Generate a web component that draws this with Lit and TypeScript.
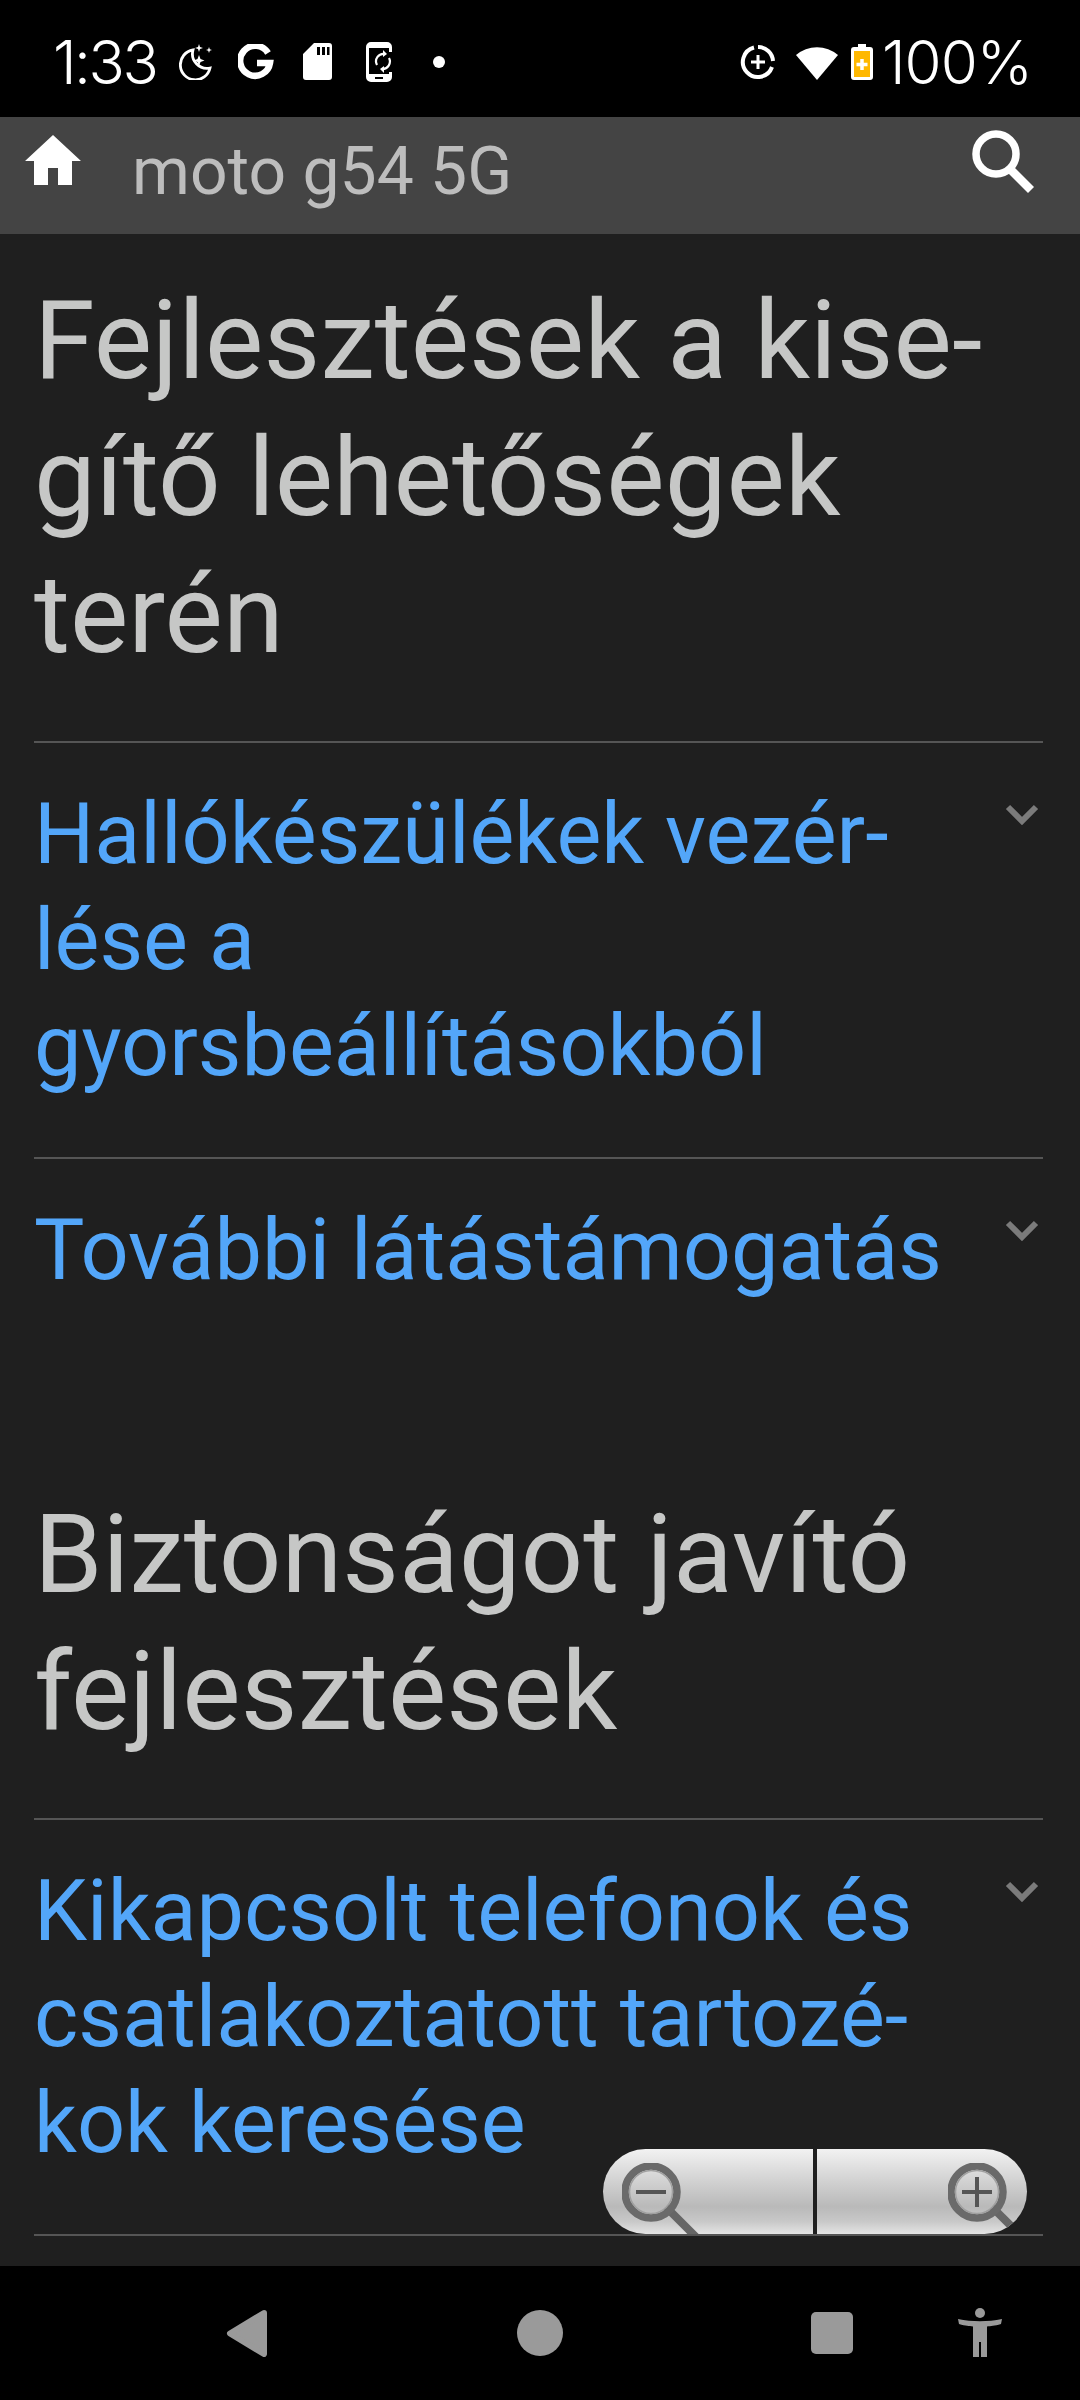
import { LitElement, html, css, svg } from "lit";
import { customElement } from "lit/decorators.js";

const SHY = "\u00AD";

const chevron = html`<svg class="chev" viewBox="0 0 34 22" width="34" height="22"><path d="M3 4 L17 18 L31 4" fill="none" stroke="#7b7b7b" stroke-width="6"/></svg>`;

const glass = (plus: boolean) => html`<svg class="glass" viewBox="0 0 80 80" width="80" height="80">
  <path d="M44 44 L74 74" stroke="#666" stroke-width="8" fill="none"/>
  <circle cx="29" cy="29" r="26" fill="none" stroke="#6a6a6a" stroke-width="7.5"/>
  <circle cx="29" cy="29" r="21.5" fill="none" stroke="#a0a0a0" stroke-width="1.5"/>
  <path d="M14 29 H44" stroke="#555" stroke-width="4"/>
  ${plus ? svg`<path d="M29 14 V44" stroke="#555" stroke-width="4"/>` : ""}
</svg>`;

@customElement("app-root")
export class AppRoot extends LitElement {
  static styles = css`
    :host { display: block; width: 1080px; height: 2400px; font-family: Roboto, "Liberation Sans", sans-serif; background: #1f1f1f; overflow: hidden; }
    .page { position: relative; display: flex; flex-direction: column; height: 2400px; }
    .status { height: 117px; flex: none; background: #000; display: flex; align-items: center; padding: 6px 54px 0 53px; box-sizing: border-box; color: #fff; font-family: Inter, sans-serif; font-weight: 300; font-size: 60px; }
    .status svg { display: block; flex: none; }
    .status .time { width: 126px; line-height: 1; letter-spacing: -2.5px; white-space: nowrap; }
    .s-g { margin-left: 25px; } .s-sd { margin-left: 29px; } .s-ph { margin-left: 34px; } .s-dot { margin-left: 41px; }
    .spacer { flex: 1; }
    .s-wifi { margin-left: 20px; } .s-bat { margin-left: 13px; }
    .pct { margin-left: 9px; line-height: 1; letter-spacing: -1px; width: 144px; white-space: nowrap; }
    .bar { height: 117px; flex: none; background: #444; display: flex; align-items: flex-start; padding: 0 46px 0 25px; box-sizing: border-box; }
    .bar .home { margin-top: 18px; }
    .bar .title { margin-left: 51px; margin-top: 17px; font-size: 66px; line-height: 76px; color: #bdbdbd; }
    .bar .spacer { flex: 1; }
    .bar .search { margin-top: 13px; }
    .content { flex: 1; min-height: 0; padding: 0 37px 0 34px; overflow: hidden; }
    h2 { margin: 0; font-weight: 400; font-size: 110px; line-height: 137px; color: #c6c7c6; }
    h2.first { margin-top: 38px; padding-bottom: 58px; }
    h2.second { margin-top: 125px; padding-bottom: 58px; }
    .item { border-top: 2px solid #555; display: flex; align-items: flex-start; padding: 39px 0 57px; }
    .item a { display: block; width: 950px; font-size: 84.6px; line-height: 106px; color: #53a6f9; text-decoration: none; }
    .item.last { border-bottom: 2px solid #555; }
    .chev { margin: 21px 0 0 21px; flex: none; }
    .nav { height: 134px; flex: none; background: #000; position: relative; display: flex; align-items: center; padding-left: 226px; box-sizing: border-box; }
    .nav svg { display: block; flex: none; }
    .n-c { margin-left: 249px; } .n-s { margin-left: 248px; } .n-a { margin-left: 105px; }
    .zoom { position: absolute; left: 603px; top: 2149px; width: 424px; height: 85px; display: flex; gap: 4px; }
    .zoom div { width: 210px; flex: none; display: flex; align-items: flex-start; background: linear-gradient(#f2f2f2 0%, #d8d8d8 30%, #b9b9b9 68%, #c8c8c8 85%, #e4e4e4 100%); overflow: hidden; box-sizing: border-box; }
    .zoom .l { border-radius: 43px 0 0 43px; padding: 14px 0 0 19px; }
    .zoom .r { border-radius: 0 43px 43px 0; padding: 14px 0 0 131px; }
    .glass { flex: none; }
  `;

  render() {
    return html`<div class="page">
      <div class="status">
        <span class="time">1:33</span>
        <svg viewBox="0 0 34 36" width="34" height="36"><path d="M14 6 A15 15 0 1 0 31 24 A14.5 14.5 0 0 1 14 6 Z" fill="none" stroke="#fff" stroke-width="2.8"/><path d="M20 11 l1.5 4 4 1.5 -4 1.5 -1.5 4 -1.5 -4 -4 -1.5 4 -1.5Z M20 0 l1 3 3 1 -3 1 -1 3 -1 -3 -3 -1 3 -1Z M30 3 l.8 2.2 2.2 .8 -2.2 .8 -.8 2.2 -.8 -2.2 -2.2 -.8 2.2 -.8Z" fill="#fff"/></svg>
        <svg class="s-g" viewBox="0 0 36 36" width="36" height="36"><path d="M30 9 A15 15 0 1 0 32 19 H19" fill="none" stroke="#fff" stroke-width="6.5"/></svg>
        <svg class="s-sd" viewBox="0 0 29 37" width="29" height="37"><path fill-rule="evenodd" d="M11 0 H26 a3 3 0 0 1 3 3 V34 a3 3 0 0 1 -3 3 H3 a3 3 0 0 1 -3 -3 V11 Z M14 4 v8 h3 v-8 Z M19 4 v8 h3 v-8 Z M24 4 v8 h2.5 v-8 Z" fill="#fff"/></svg>
        <svg class="s-ph" viewBox="0 0 26 40" width="26" height="40"><path fill-rule="evenodd" d="M5 0 H21 a5 5 0 0 1 5 5 V35 a5 5 0 0 1 -5 5 H5 a5 5 0 0 1 -5 -5 V5 a5 5 0 0 1 5 -5 Z M3 6 V32 H23 V6 Z M9 35 v2 h8 v-2 Z" fill="#fff"/><rect x="7" y="10" width="19" height="20" fill="#000"/><path d="M11 23 A7.5 7.5 0 0 1 19 12 M23 16 A7.5 7.5 0 0 1 16 27" fill="none" stroke="#fff" stroke-width="2.2"/><path d="M17 8 l4 4 -4 3 Z M18 24 l-4 3 4 4 Z" fill="#fff"/></svg>
        <svg class="s-dot" viewBox="0 0 12 12" width="12" height="12"><circle cx="6" cy="6" r="6" fill="#fff"/></svg>
        <span class="spacer"></span>
        <svg viewBox="0 0 36 36" width="36" height="36"><path d="M18 3 A15 15 0 0 1 33 17 M32 23 A15 15 0 1 1 14 3.5" fill="none" stroke="#fff" stroke-width="4"/><path d="M18 11 V25 M11 18 H25" stroke="#fff" stroke-width="3"/></svg>
        <svg class="s-wifi" viewBox="0 0 42 36" width="42" height="36"><path d="M0 11 A32 32 0 0 1 42 11 L21 36 Z" fill="#fff"/></svg>
        <svg class="s-bat" viewBox="0 0 22 36" width="22" height="36"><path d="M7 0 H15 V3 H19 a3 3 0 0 1 3 3 V33 a3 3 0 0 1 -3 3 H3 a3 3 0 0 1 -3 -3 V6 a3 3 0 0 1 3 -3 H7 Z" fill="#fff"/><rect x="3" y="7" width="16" height="26" fill="#ffb800"/><path d="M11 15 V26 M5.5 20.5 H16.5" stroke="#fff" stroke-width="3.5"/></svg>
        <span class="pct">100%</span>
      </div>
      <div class="bar">
        <svg class="home" viewBox="0 0 56 50" width="56" height="50"><path d="M28 0 L56 26 H47 V50 H33 V33 H23 V50 H9 V26 H0 Z" fill="#fff"/></svg>
        <span class="title">moto g54 5G</span>
        <span class="spacer"></span>
        <svg class="search" viewBox="0 0 62 64" width="62" height="64"><circle cx="24" cy="24" r="20" fill="none" stroke="#fff" stroke-width="7.5"/><path d="M38 39 L59 60" stroke="#fff" stroke-width="8.5" fill="none"/></svg>
      </div>
      <div class="content">
        <h2 class="first">Fejlesztések a kise${SHY}gítő lehetőségek terén</h2>
        <div class="item"><a>Hallókészülékek vezér${SHY}lése a gyorsbeállításokból</a>${chevron}</div>
        <div class="item"><a>További látástámogatás</a>${chevron}</div>
        <h2 class="second">Biztonságot javító fejlesztések</h2>
        <div class="item last"><a>Kikapcsolt telefonok és csatlakoztatott tartozé${SHY}kok keresése</a>${chevron}</div>
      </div>
      <div class="nav">
        <svg viewBox="0 0 42 47" width="42" height="47"><path d="M38 3 L4 23.5 L38 44 Z" fill="#9a9a9a" stroke="#9a9a9a" stroke-width="6" stroke-linejoin="round"/></svg>
        <svg class="n-c" viewBox="0 0 46 46" width="46" height="46"><circle cx="23" cy="23" r="23" fill="#9a9a9a"/></svg>
        <svg class="n-s" viewBox="0 0 42 42" width="42" height="42"><rect width="42" height="42" rx="5" fill="#9a9a9a"/></svg>
        <svg class="n-a" viewBox="0 0 44 50" width="44" height="50"><circle cx="22" cy="5" r="5" fill="#9a9a9a"/><path d="M0 11 L1 16 C8 18 11 18 15 18.5 V49 H21 V34 H23 V49 H29 V18.5 C33 18 36 18 43 16 L44 11 C30 14 14 14 0 11 Z" fill="#9a9a9a"/></svg>
      </div>
      <div class="zoom">
        <div class="l">${glass(false)}</div>
        <div class="r">${glass(true)}</div>
      </div>
    </div>`;
  }
}
